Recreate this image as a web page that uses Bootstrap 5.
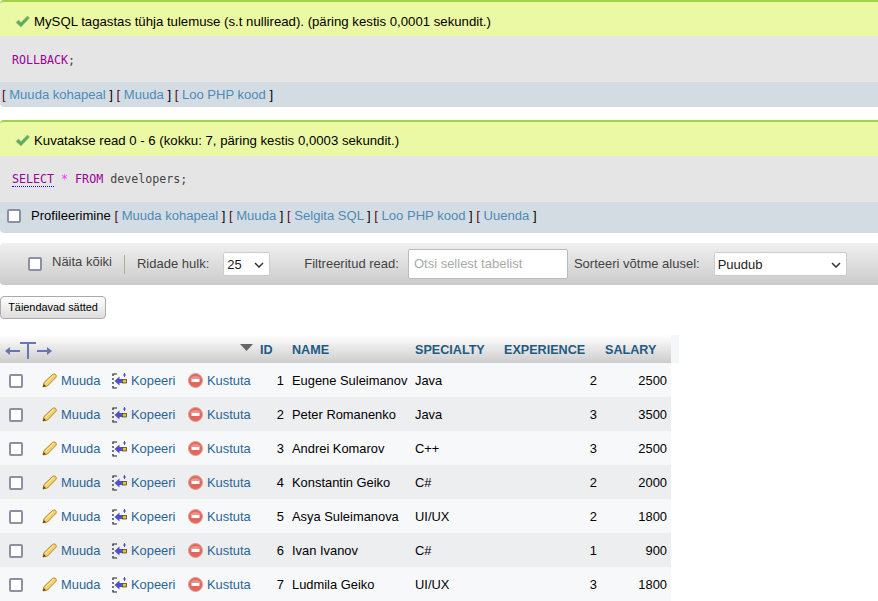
<!DOCTYPE html>
<html lang="et">
<head>
    <meta charset="UTF-8">
    <title>phpMyAdmin</title>
    <link href="https://cdn.jsdelivr.net/npm/bootstrap@5.3.0/dist/css/bootstrap.min.css" rel="stylesheet">
    <style>
        html, body { height: 601px; overflow: hidden; }
        body { font-family: "Liberation Sans", Arial, sans-serif; font-size: 13px; color: #000; background: #fff; }
        a { color: #235a81; text-decoration: none; }
        .tool-link { color: #4d8ab8; }
        .result-box { border-radius: 0 0 0 4px; overflow: hidden; }
        .msg-ok { background: #ebf8a4; border-top: 2px solid #a2d246; border-radius: 4px 0 0 0; height: 36px; padding: 3px 0 0 15px; gap: 4px; font-size: 13.2px; }
        .sql-code { background: #e5e5e5; font-family: "DejaVu Sans Mono", monospace; font-size: 11.65px; padding: 2px 0 0 12px; color: #444; }
        .sql-kw { color: #909; }
        .sql-op { color: #f3f; }
        .sql-doc { border-bottom: 1px dotted #00f; color: #909; }
        .sql-tools { background: #d3dce3; font-size: 13.05px; color: #000; }
        .sql-tools i { color: #5a0a14; font-style: normal; }
        .nav-strip { height: 42px; background: linear-gradient(#f0f0f0, #cbcbcb); border-radius: 4px 0 0 4px; margin-top: 10px; padding-left: 28px; color: #444; font-size: 13px; }
        .tick { appearance: none; width: 14px; height: 14px; border: 2px solid #8f8fa3; border-radius: 2px; background: #fff; margin: 0; flex: none; display: block; }
        .strip-sep { width: 1px; height: 19px; background: #b5a89c; margin: 0 12px 0 12px; }
        .pick { height: 24px; border: 1px solid #ccc; border-radius: 2px; background: #fff; color: #222; font-size: 13px; padding: 2px 3px 0; position: relative; }
        .pick svg { position: absolute; right: 5px; top: 9px; }
        .find-box { width: 160px; height: 30px; border: 1px solid #bbb; border-radius: 2px; background: #fff; color: #aaa; padding-left: 5px; }
        .more-btn { height: 23px; width: 106px; margin-top: 11px; border: 1px solid #aaa; border-radius: 4px; background: linear-gradient(#fff, #ddd); font-size: 10.9px; color: #000; padding: 0; }
        .data-wrap { margin-top: 16px; position: relative; }
        .data-head-tail { position: absolute; left: 671px; top: 0; width: 8px; height: 28px; background: #f5f6f8; }
        .data-grid { width: 671px; table-layout: fixed; border-collapse: collapse; font-size: 12.9px; }
        .data-grid th { height: 28px; background: linear-gradient(#fff, #ccc); color: #235a81; font-size: 12.6px; font-weight: bold; padding: 2px 0 0 4px; white-space: nowrap; }
        .data-grid td { height: 34px; padding: 2px 4px 0; white-space: nowrap; }
        .data-grid tbody tr:nth-child(odd) td { background: #f7f8fa; }
        .data-grid tbody tr:nth-child(even) td { background: #edeef0; }
        .data-grid .act { padding: 2px 0 0; }
        .data-grid .act a { color: #2a6496; display: flex; align-items: center; gap: 4px; }
        .data-grid .num { text-align: right; }
    </style>
</head>
<body>

<!-- Rollback -->
<div class="result-box">
    <div class="msg-ok d-flex align-items-center" style="padding-top:5px">
        <svg width="15" height="13" viewBox="0 0 15 13"><path d="M1 7.500l2.500-2.500L6 7.500 12.500 1 14.500 3 6 12z" fill="#5cae5c" stroke="#9ab08a" stroke-width=".5"/></svg>
        <span>MySQL tagastas tühja tulemuse (s.t nulliread). (päring kestis 0,0001 sekundit.)</span>
    </div>
    <div class="sql-code d-flex align-items-center" style="height:46px;padding-top:4px"><span><span class="sql-kw">ROLLBACK</span>;</span></div>
    <div class="sql-tools d-flex align-items-center" style="height:25px;padding:1px 0 0 2px">
        <span><i>[</i> <a class="tool-link" href="#">Muuda kohapeal</a> ] <i>[</i> <a class="tool-link" href="#">Muuda</a> ] <i>[</i> <a class="tool-link" href="#">Loo PHP kood</a> ]</span>
    </div>
</div>

<!-- Select -->
<div class="result-box" style="margin-top:13px">
    <div class="msg-ok d-flex align-items-center">
        <svg width="15" height="13" viewBox="0 0 15 13"><path d="M1 7.500l2.500-2.500L6 7.500 12.500 1 14.500 3 6 12z" fill="#5cae5c" stroke="#9ab08a" stroke-width=".5"/></svg>
        <span>Kuvatakse read 0 - 6 (kokku: 7, päring kestis 0,0003 sekundit.)</span>
    </div>
    <div class="sql-code d-flex align-items-center" style="height:46px"><span><span class="sql-doc">SELECT</span> <span class="sql-op">*</span> <span class="sql-kw">FROM</span> developers;</span></div>
    <div class="sql-tools d-flex align-items-center" style="height:31px;padding:0 0 3px 7px;gap:10px">
        <input class="tick" type="checkbox">
        <span><span>Profileerimine</span> <i>[</i> <a class="tool-link" href="#">Muuda kohapeal</a> ] <i>[</i> <a class="tool-link" href="#">Muuda</a> ] <i>[</i> <a class="tool-link" href="#">Selgita SQL</a> ] <i>[</i> <a class="tool-link" href="#">Loo PHP kood</a> ] <i>[</i> <a class="tool-link" href="#">Uuenda</a> ]</span>
    </div>
</div>

<!-- Navigation strip -->
<div class="nav-strip d-flex align-items-center">
    <input class="tick" type="checkbox">
    <span style="margin:-5px 0 0 10px">Näita kõiki</span>
    <span class="strip-sep"></span>
    <span>Ridade hulk:</span>
    <div class="pick d-flex align-items-center" style="width:47px;margin-left:14px">25
        <svg width="10" height="6" viewBox="0 0 10 6"><path d="M1 1l4 4 4-4" fill="none" stroke="#333" stroke-width="1.500"/></svg>
    </div>
    <span style="margin-left:34px">Filtreeritud read:</span>
    <div class="find-box d-flex align-items-center" style="margin-left:9px">Otsi sellest tabelist</div>
    <span style="margin-left:6px">Sorteeri võtme alusel:</span>
    <div class="pick d-flex align-items-center" style="width:133px;margin-left:14px">Puudub
        <svg width="10" height="6" viewBox="0 0 10 6"><path d="M1 1l4 4 4-4" fill="none" stroke="#333" stroke-width="1.500"/></svg>
    </div>
</div>

<button class="more-btn d-block" type="button">Täiendavad sätted</button>

<!-- Results -->
<div class="data-wrap">
    <div class="data-head-tail"></div>
    <table class="data-grid" id="rows">
        <colgroup>
            <col style="width:33px"><col style="width:75px"><col style="width:76px"><col style="width:72px">
            <col style="width:32px"><col style="width:123px"><col style="width:89px"><col style="width:101px"><col style="width:70px">
        </colgroup>
        <thead>
            <tr>
                <th colspan="4" style="padding-left:5px">
                    <div class="d-flex justify-content-between align-items-center">
                        <svg width="47" height="17" viewBox="0 0 47 17"><path d="M0 9l5-4v3h10v2H5v3zM47 9l-5-4v3H32v2h10v3zM15 0h16v2h-7v15h-2V2h-7z" fill="#6a76b4"/></svg>
                        <svg width="13" height="7" viewBox="0 0 13 7" style="margin-right:3px;margin-top:-6px"><path d="M0 0h13L6.500 7z" fill="#666"/></svg>
                    </div>
                </th>
                <th>ID</th><th>NAME</th><th>SPECIALTY</th><th>EXPERIENCE</th><th>SALARY</th>
            </tr>
        </thead>
        <tbody></tbody>
    </table>
</div>

<script>
    var people = [
        [1, "Eugene Suleimanov", "Java", 2, 2500],
        [2, "Peter Romanenko", "Java", 3, 3500],
        [3, "Andrei Komarov", "C++", 3, 2500],
        [4, "Konstantin Geiko", "C#", 2, 2000],
        [5, "Asya Suleimanova", "UI/UX", 2, 1800],
        [6, "Ivan Ivanov", "C#", 1, 900],
        [7, "Ludmila Geiko", "UI/UX", 3, 1800]
    ];
    var pencil = '<svg width="15" height="15" viewBox="0 0 15 15"><path d="M1 14l1-4.500L10.500 1.500c1-.8 2-.8 3 0s1 2 .3 3L5.500 13z" fill="#f5cf6a" stroke="#b8862c"/><path d="M3.500 10.500l8-8" stroke="#fbeeb8"/><path d="M1 14l.8-3 2.200 2.200z" fill="#5a3c18"/></svg>';
    var copy = '<svg width="15" height="16" viewBox="0 0 15 16"><path d="M5 1H1v2M1 5v2M1 9v2M1 13v2h4" fill="none" stroke="#222" stroke-width="1.200"/><path d="M2.500 8 7.500 3.500V6H10v4H7.500v2.500z" fill="#4f4fd0"/><rect x="10.500" y="6.500" width="4" height="3.500" fill="#f0c420" stroke="#333" stroke-width=".7"/><path d="M12.500 0v4M11 2h3" stroke="#4f4fd0"/></svg>';
    var stop = '<svg width="15" height="15" viewBox="0 0 15 15"><circle cx="7.500" cy="7.500" r="7" fill="#e2665c" stroke="#d8a098"/><path d="M2 6a6 5 0 0 1 11 0z" fill="#f09088"/><rect x="3.500" y="6" width="8" height="3" fill="#fff"/></svg>';
    var html = "";
    people.forEach(function (p) {
        html += '<tr><td style="padding-left:9px"><input class="tick" type="checkbox"></td>' +
            '<td class="act"><a href="#" style="padding-left:9px">' + pencil + 'Muuda</a></td>' +
            '<td class="act"><a href="#" style="padding-left:4px">' + copy + 'Kopeeri</a></td>' +
            '<td class="act"><a href="#" style="padding-left:4px">' + stop + 'Kustuta</a></td>' +
            '<td class="num">' + p[0] + '</td><td>' + p[1] + '</td><td>' + p[2] + '</td>' +
            '<td class="num">' + p[3] + '</td><td class="num">' + p[4] + '</td></tr>';
    });
    document.querySelector("#rows tbody").innerHTML = html;
</script>
<script src="https://cdn.jsdelivr.net/npm/bootstrap@5.3.0/dist/js/bootstrap.bundle.min.js"></script>
</body>
</html>
